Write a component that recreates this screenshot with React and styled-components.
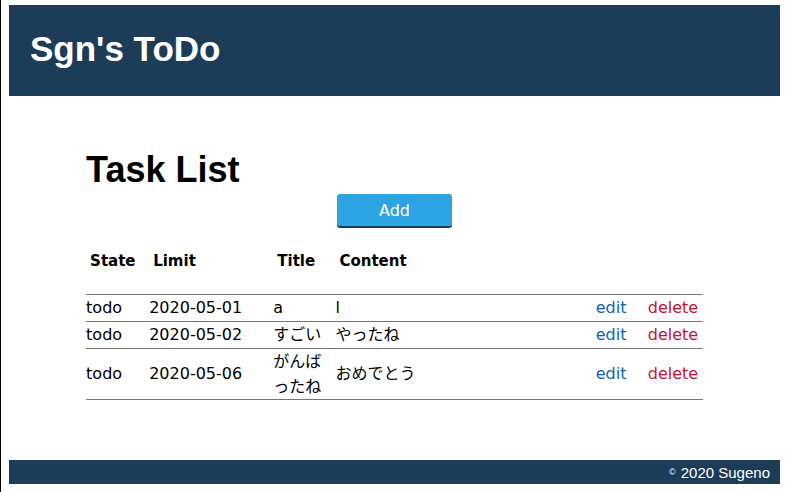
import styled, { createGlobalStyle } from 'styled-components';

const GlobalStyle = createGlobalStyle`
  html, body {
    margin: 0;
    padding: 0;
    background: #fff;
  }
  *, *::before, *::after {
    box-sizing: border-box;
  }
`;

const columns = [
  { key: 'state', label: 'State', width: 63 },
  { key: 'limit', label: 'Limit', width: 124 },
  { key: 'title', label: 'Title', width: 62 },
  { key: 'content', label: 'Content', width: 260 },
  { key: 'edit', label: '', width: 52 },
  { key: 'delete', label: '', width: 55 }
];

const tasks = [
  { id: 1, state: 'todo', limit: '2020-05-01', title: 'a', content: 'l' },
  { id: 2, state: 'todo', limit: '2020-05-02', title: 'すごい', content: 'やったね' },
  { id: 3, state: 'todo', limit: '2020-05-06', title: 'がんばったね', content: 'おめでとう' }
];

const Page = styled.div`
  display: flex;
  flex-direction: column;
  height: 100vh;
  padding: 5px 7px 8px 8px;
  border-left: 1px solid #000;
  font-family: 'DejaVu Sans', 'Noto Sans CJK JP', sans-serif;
  color: #000;
`;

const Header = styled.header`
  display: flex;
  align-items: center;
  height: 91px;
  padding: 0 0 4px 21px;
  background-color: #1d3c58;

  & h1 {
    margin: 0;
    font-family: 'Liberation Sans', Arial, sans-serif;
    font-size: 35px;
    font-weight: 700;
    color: #fff;
  }
`;

const Main = styled.main`
  flex: 1;
  width: 80%;
  margin: 0 auto;
  padding-top: 54px;
`;

const Heading = styled.h2`
  margin: 0;
  height: 40px;
  font-family: 'Liberation Sans', Arial, sans-serif;
  font-size: 36px;
  line-height: 40px;
  font-weight: 700;
`;

const Actions = styled.div`
  display: flex;
  justify-content: center;
  margin-top: 4px;
`;

const AddButton = styled.button`
  width: 115px;
  height: 34px;
  padding: 0;
  border: none;
  border-bottom: 2px solid #1d3c58;
  border-radius: 3px;
  background-color: #2ca4e4;
  color: #fff;
  font-family: 'DejaVu Sans', sans-serif;
  font-size: 16px;
  cursor: pointer;
`;

const Table = styled.table`
  width: 100%;
  border-collapse: collapse;
  table-layout: fixed;
`;

const Col = styled.col`
  width: ${({ $width }) => $width}px;
`;

const HeadCell = styled.th`
  height: 66px;
  padding: 0 0 0 4px;
  text-align: left;
  vertical-align: middle;
  font-size: 15px;
  font-weight: 700;
  border-bottom: 1px solid #777;
`;

const Cell = styled.td`
  height: 27px;
  padding: 0;
  font-size: 16px;
  line-height: 25px;
  vertical-align: middle;
  border-bottom: 1px solid #777;
`;

const Link = styled.a`
  color: ${({ $danger }) => ($danger ? '#c4122f' : '#0d62b5')};
  text-decoration: none;
  cursor: pointer;
`;

const Footer = styled.footer`
  display: flex;
  align-items: center;
  justify-content: flex-end;
  height: 24px;
  padding-right: 10px;
  background-color: #1d3c58;
  color: #fff;
  font-family: 'Liberation Sans', Arial, sans-serif;
  font-size: 15px;

  & small {
    font-size: 9px;
    margin-right: 5px;
  }
`;

const App = () => {
  return (
    <>
      <GlobalStyle />
      <Page>
        <Header>
          <h1>Sgn's ToDo</h1>
        </Header>
        <Main>
          <Heading>Task List</Heading>
          <Actions>
            <AddButton>Add</AddButton>
          </Actions>
          <Table>
            <colgroup>
              {columns.map((col) => (
                <Col key={col.key} $width={col.width} />
              ))}
            </colgroup>
            <thead>
              <tr>
                {columns.map((col) => (
                  <HeadCell key={col.key}>{col.label}</HeadCell>
                ))}
              </tr>
            </thead>
            <tbody>
              {tasks.map((task) => (
                <tr key={task.id}>
                  <Cell>{task.state}</Cell>
                  <Cell>{task.limit}</Cell>
                  <Cell>{task.title}</Cell>
                  <Cell>{task.content}</Cell>
                  <Cell>
                    <Link>edit</Link>
                  </Cell>
                  <Cell>
                    <Link $danger>delete</Link>
                  </Cell>
                </tr>
              ))}
            </tbody>
          </Table>
        </Main>
        <Footer>
          <small>©</small>2020 Sugeno
        </Footer>
      </Page>
    </>
  );
};

export default App;
